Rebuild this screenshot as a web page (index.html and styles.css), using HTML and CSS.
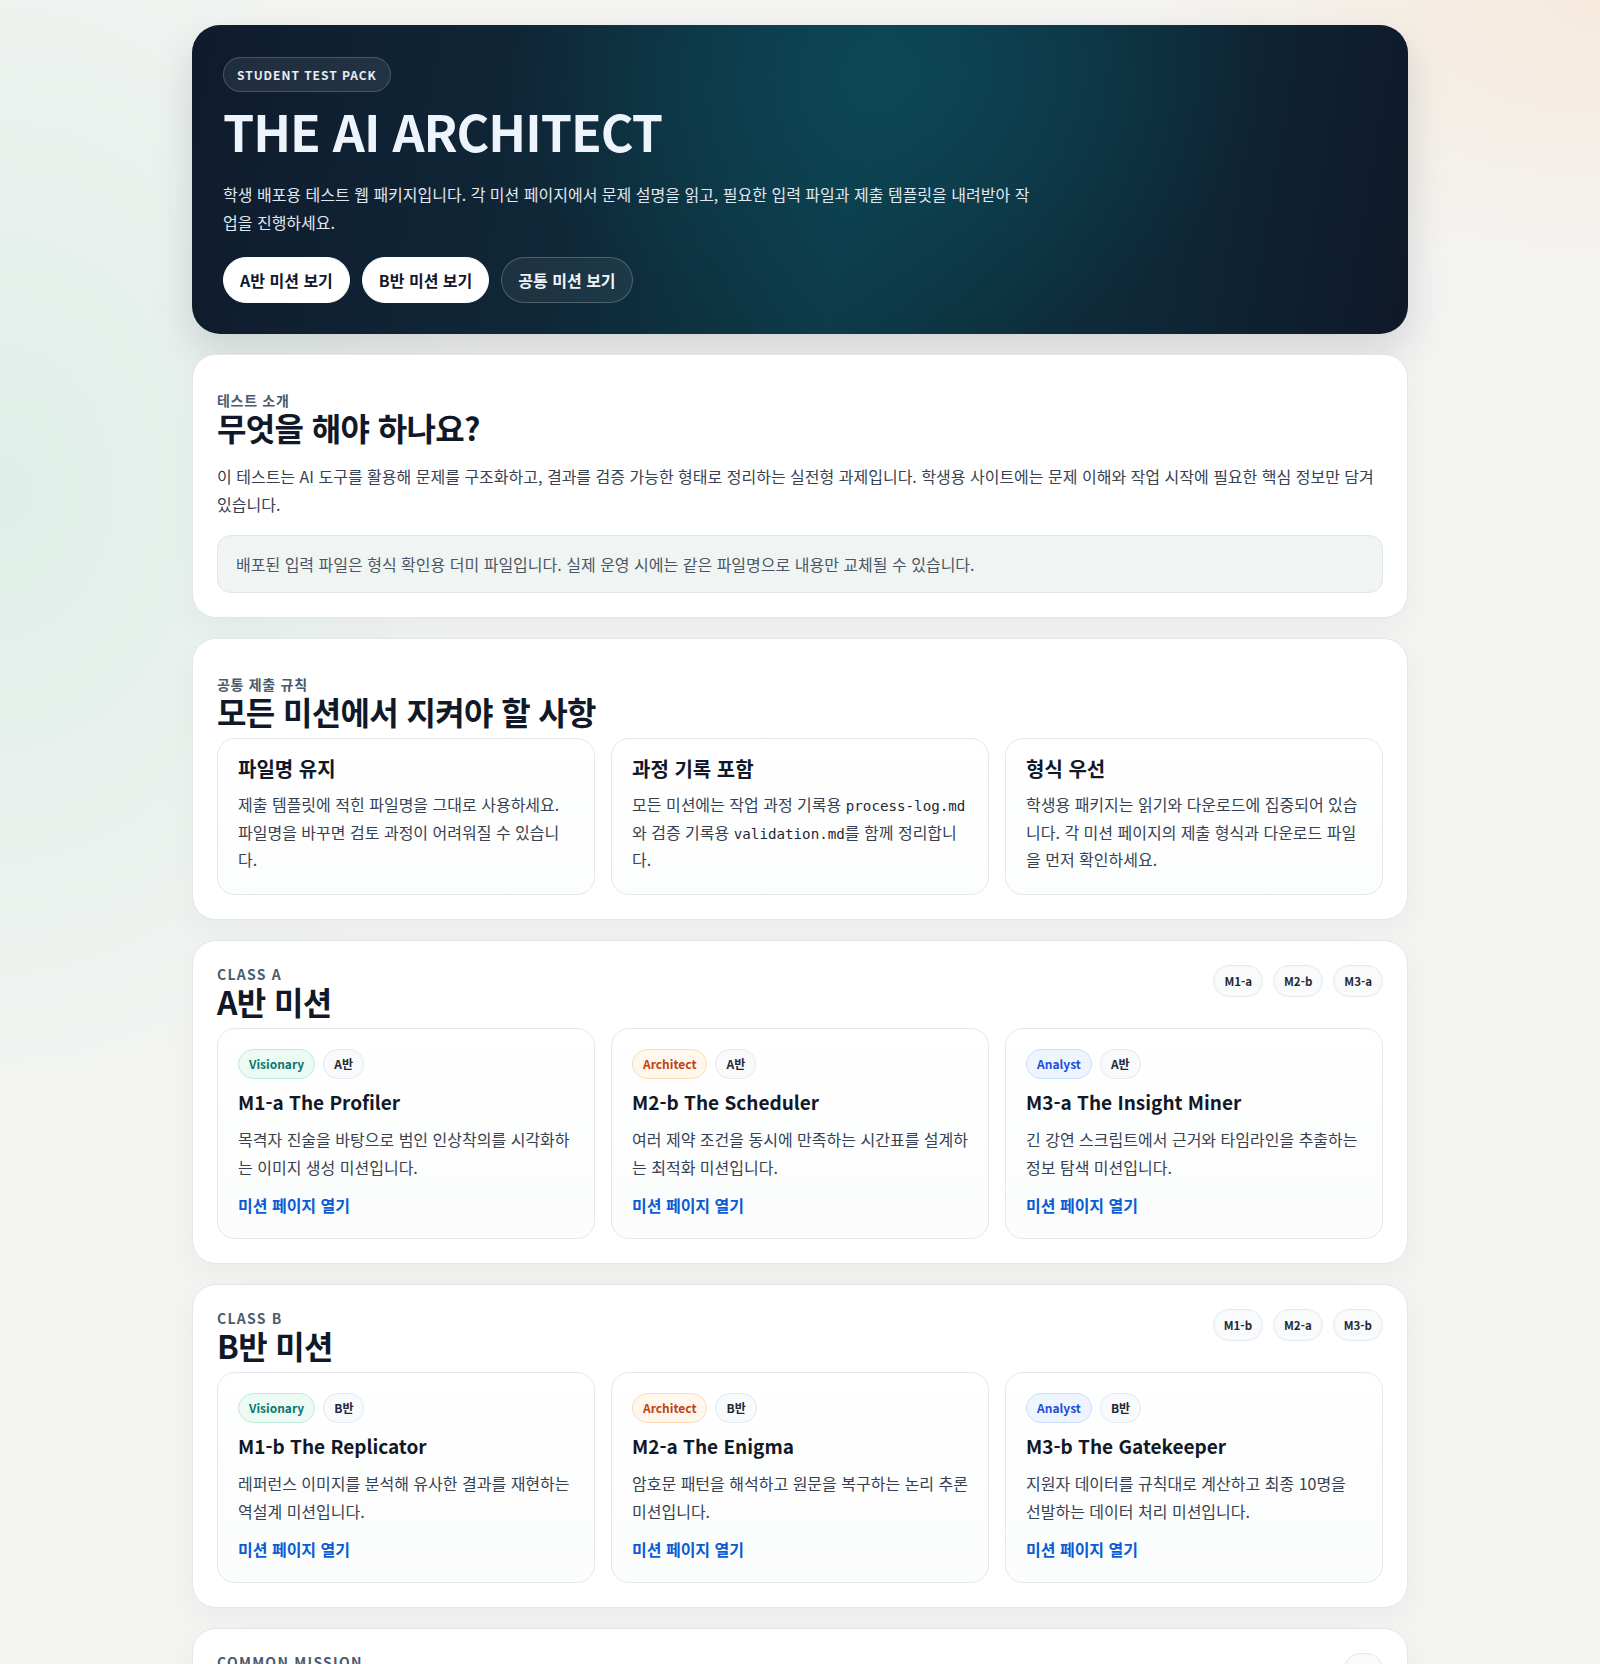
FILE: index.html
```html
<!DOCTYPE html>
<html lang="ko">
<head>
<meta charset="utf-8">
<title>THE AI ARCHITECT — Student Test Pack</title>
<link rel="stylesheet" href="styles.css">
</head>
<body>
<main class="page">
  <header class="hero">
    <span class="hero-badge">STUDENT TEST PACK</span>
    <h1 class="hero-title">THE AI ARCHITECT</h1>
    <p class="hero-text">학생 배포용 테스트 웹 패키지입니다. 각 미션 페이지에서 문제 설명을 읽고, 필요한 입력 파일과 제출 템플릿을 내려받아 작업을 진행하세요.</p>
    <div class="hero-actions">
      <a class="btn btn-light" href="#class-a">A반 미션 보기</a>
      <a class="btn btn-light" href="#class-b">B반 미션 보기</a>
      <a class="btn btn-ghost" href="#common">공통 미션 보기</a>
    </div>
  </header>

  <section class="panel panel-top">
    <div class="panel-head">
      <span class="eyebrow">테스트 소개</span>
      <h2 class="panel-title">무엇을 해야 하나요?</h2>
    </div>
    <p class="intro-text">이 테스트는 AI 도구를 활용해 문제를 구조화하고, 결과를 검증 가능한 형태로 정리하는 실전형 과제입니다. 학생용 사이트에는 문제 이해와 작업 시작에 필요한 핵심 정보만 담겨 있습니다.</p>
    <div class="note">배포된 입력 파일은 형식 확인용 더미 파일입니다. 실제 운영 시에는 같은 파일명으로 내용만 교체될 수 있습니다.</div>
  </section>

  <section class="panel panel-top">
    <div class="panel-head">
      <span class="eyebrow">공통 제출 규칙</span>
      <h2 class="panel-title">모든 미션에서 지켜야 할 사항</h2>
    </div>
    <div class="grid">
      <article class="rule">
        <h3 class="rule-title">파일명 유지</h3>
        <p class="rule-text">제출 템플릿에 적힌 파일명을 그대로 사용하세요. 파일명을 바꾸면 검토 과정이 어려워질 수 있습니다.</p>
      </article>
      <article class="rule">
        <h3 class="rule-title">과정 기록 포함</h3>
        <p class="rule-text">모든 미션에는 작업 과정 기록용 <code>process-log.md</code>와 검증 기록용 <code>validation.md</code>를 함께 정리합니다.</p>
      </article>
      <article class="rule">
        <h3 class="rule-title">형식 우선</h3>
        <p class="rule-text">학생용 패키지는 읽기와 다운로드에 집중되어 있습니다. 각 미션 페이지의 제출 형식과 다운로드 파일을 먼저 확인하세요.</p>
      </article>
    </div>
  </section>

  <section class="panel" id="class-a">
    <div class="panel-row">
      <div class="panel-head">
        <span class="eyebrow eyebrow-latin">CLASS A</span>
        <h2 class="panel-title">A반 미션</h2>
      </div>
      <div class="chips">
        <span class="chip">M1-a</span>
        <span class="chip">M2-b</span>
        <span class="chip">M3-a</span>
      </div>
    </div>
    <div class="grid">
      <article class="mission">
        <div class="tags"><span class="tag tag-visionary">Visionary</span><span class="tag">A반</span></div>
        <h3 class="mission-title">M1-a The Profiler</h3>
        <p class="mission-text">목격자 진술을 바탕으로 범인 인상착의를 시각화하는 이미지 생성 미션입니다.</p>
        <a class="mission-link" href="#">미션 페이지 열기</a>
      </article>
      <article class="mission">
        <div class="tags"><span class="tag tag-architect">Architect</span><span class="tag">A반</span></div>
        <h3 class="mission-title">M2-b The Scheduler</h3>
        <p class="mission-text">여러 제약 조건을 동시에 만족하는 시간표를 설계하는 최적화 미션입니다.</p>
        <a class="mission-link" href="#">미션 페이지 열기</a>
      </article>
      <article class="mission">
        <div class="tags"><span class="tag tag-analyst">Analyst</span><span class="tag">A반</span></div>
        <h3 class="mission-title">M3-a The Insight Miner</h3>
        <p class="mission-text">긴 강연 스크립트에서 근거와 타임라인을 추출하는 정보 탐색 미션입니다.</p>
        <a class="mission-link" href="#">미션 페이지 열기</a>
      </article>
    </div>
  </section>

  <section class="panel" id="class-b">
    <div class="panel-row">
      <div class="panel-head">
        <span class="eyebrow eyebrow-latin">CLASS B</span>
        <h2 class="panel-title">B반 미션</h2>
      </div>
      <div class="chips">
        <span class="chip">M1-b</span>
        <span class="chip">M2-a</span>
        <span class="chip">M3-b</span>
      </div>
    </div>
    <div class="grid">
      <article class="mission">
        <div class="tags"><span class="tag tag-visionary">Visionary</span><span class="tag">B반</span></div>
        <h3 class="mission-title">M1-b The Replicator</h3>
        <p class="mission-text">레퍼런스 이미지를 분석해 유사한 결과를 재현하는 역설계 미션입니다.</p>
        <a class="mission-link" href="#">미션 페이지 열기</a>
      </article>
      <article class="mission">
        <div class="tags"><span class="tag tag-architect">Architect</span><span class="tag">B반</span></div>
        <h3 class="mission-title">M2-a The Enigma</h3>
        <p class="mission-text">암호문 패턴을 해석하고 원문을 복구하는 논리 추론 미션입니다.</p>
        <a class="mission-link" href="#">미션 페이지 열기</a>
      </article>
      <article class="mission">
        <div class="tags"><span class="tag tag-analyst">Analyst</span><span class="tag">B반</span></div>
        <h3 class="mission-title">M3-b The Gatekeeper</h3>
        <p class="mission-text">지원자 데이터를 규칙대로 계산하고 최종 10명을 선발하는 데이터 처리 미션입니다.</p>
        <a class="mission-link" href="#">미션 페이지 열기</a>
      </article>
    </div>
  </section>

  <section class="panel" id="common">
    <div class="panel-row">
      <div class="panel-head">
        <span class="eyebrow eyebrow-latin">COMMON MISSION</span>
        <h2 class="panel-title">공통 미션</h2>
      </div>
      <div class="chips">
        <span class="chip">M4</span>
      </div>
    </div>
    <div class="grid">
      <article class="mission">
        <div class="tags"><span class="tag">공통</span></div>
        <h3 class="mission-title">M4 Common Mission</h3>
        <p class="mission-text">모든 학생이 함께 수행하는 공통 미션입니다.</p>
        <a class="mission-link" href="#">미션 페이지 열기</a>
      </article>
    </div>
  </section>
</main>
</body>
</html>
```

FILE: styles.css
```css
* {
  box-sizing: border-box;
}

html,
body {
  margin: 0;
  padding: 0;
}

body {
  font-family: "Noto Sans CJK KR", "Noto Sans", sans-serif;
  color: #1f2937;
  font-size: 16px;
  background:
    radial-gradient(ellipse 700px 420px at 100% 0%, rgba(250, 226, 204, 0.55), rgba(250, 226, 204, 0) 70%),
    radial-gradient(ellipse 700px 900px at 0% 25%, rgba(214, 236, 228, 0.7), rgba(214, 236, 228, 0) 70%),
    #f3f4f2;
  min-height: 100vh;
}

.page {
  width: 1216px;
  margin: 0 auto;
  padding: 25px 0 40px;
  display: flex;
  flex-direction: column;
  gap: 20px;
}

/* HERO */
.hero {
  border-radius: 28px;
  padding: 32px 31px 31px;
  color: #f1f5f9;
  background:
    radial-gradient(ellipse 520px 400px at 57% 16%, rgba(12, 74, 90, 0.8), rgba(12, 74, 90, 0) 72%),
    linear-gradient(100deg, #0f1b2d 0%, #0f2838 32%, #0c3a47 54%, #0e2b3a 74%, #0f1829 100%);
  box-shadow: 0 18px 40px rgba(15, 23, 42, 0.14);
}

.hero-badge {
  display: inline-block;
  height: 35px;
  line-height: 33px;
  padding: 0 13px;
  border-radius: 999px;
  border: 1px solid rgba(255, 255, 255, 0.18);
  background: rgba(255, 255, 255, 0.08);
  font-size: 12px;
  font-weight: 700;
  letter-spacing: 0.08em;
  color: #e8eef5;
}

.hero-title {
  margin: 10px 0 0;
  font-size: 50px;
  line-height: 56px;
  font-weight: 700;
  letter-spacing: -0.02em;
  color: #eef4fb;
}

.hero-text {
  margin: 22px 0 0;
  max-width: 812px;
  line-height: 28px;
  color: #e2e8f0;
}

.hero-actions {
  display: flex;
  gap: 12px;
  margin-top: 21px;
}

.btn {
  display: inline-flex;
  align-items: center;
  height: 46px;
  padding: 0 16px;
  border-radius: 999px;
  font-size: 16px;
  font-weight: 700;
  text-decoration: none;
}

.btn-light {
  background: #ffffff;
  color: #0f172a;
  border: 1px solid #ffffff;
}

.btn-ghost {
  background: rgba(255, 255, 255, 0.06);
  color: #f1f5f9;
  border: 1px solid rgba(255, 255, 255, 0.22);
}

/* PANELS */
.panel {
  background: #ffffff;
  border: 1px solid #e3e7e6;
  border-radius: 24px;
  padding: 24px;
  box-shadow: 0 10px 30px rgba(15, 23, 42, 0.035);
}

.panel-top {
  padding-top: 36px;
}

.panel-row {
  display: flex;
  justify-content: space-between;
  align-items: flex-start;
}

.panel-head {
  display: flex;
  flex-direction: column;
}

.eyebrow {
  font-size: 14px;
  line-height: 18px;
  font-weight: 700;
  letter-spacing: 0.05em;
  color: #4b5b6b;
}

.eyebrow-latin {
  letter-spacing: 0.09em;
}

.panel-title {
  margin: 0;
  font-size: 32px;
  line-height: 36px;
  font-weight: 700;
  letter-spacing: -0.02em;
  color: #111827;
}

.intro-text {
  margin: 18px 0 0;
  line-height: 27.6px;
  color: #374151;
}

.note {
  margin-top: 17px;
  padding: 16px 18px;
  border-radius: 14px;
  background: #f0f5f3;
  border: 1px solid #dfe8e4;
  line-height: 24px;
  color: #4b5563;
}

.chips {
  display: flex;
  gap: 10px;
}

.chip {
  height: 32px;
  line-height: 30px;
  padding: 0 10px;
  border-radius: 999px;
  border: 1px solid #e2e8f0;
  background: #f8fafc;
  font-size: 11.5px;
  font-weight: 700;
  color: #1f2937;
}

.grid {
  display: grid;
  grid-template-columns: repeat(3, 1fr);
  gap: 16px;
  margin-top: 9px;
}

/* RULE CARDS */
.rule {
  border: 1px solid #e5e7eb;
  border-radius: 18px;
  padding: 17px 18.5px 20px 20px;
  background: linear-gradient(180deg, #ffffff 0%, #fcfdfd 100%);
}

.rule-title {
  margin: 0;
  font-size: 20px;
  line-height: 26px;
  font-weight: 700;
  color: #111827;
}

.rule-text {
  margin: 9px 0 0;
  line-height: 27.6px;
  color: #374151;
}

code {
  font-family: "DejaVu Sans Mono", "Liberation Mono", monospace;
  font-size: 14.2px;
  line-height: 1;
  color: #1f2937;
}

/* MISSION CARDS */
.mission {
  display: flex;
  flex-direction: column;
  align-items: flex-start;
  border: 1px solid #e5e7eb;
  border-radius: 18px;
  padding: 20px 18.5px 21px 20px;
  background: linear-gradient(180deg, #ffffff 0%, #fbfcfc 100%);
}

.tags {
  display: flex;
  gap: 8px;
}

.tag {
  height: 30px;
  line-height: 28px;
  padding: 0 10px;
  border-radius: 999px;
  border: 1px solid #e2e8f0;
  background: #f8fafc;
  font-size: 12px;
  font-weight: 700;
  color: #1f2937;
}

.tag-visionary {
  background: #ecfaf4;
  border-color: #bfeadb;
  color: #0f766e;
}

.tag-architect {
  background: #fff6ec;
  border-color: #fcdcb8;
  color: #c2410c;
}

.tag-analyst {
  background: #eef5ff;
  border-color: #c8dcfb;
  color: #1d4ed8;
}

.mission-title {
  margin: 10px 0 0;
  font-size: 19px;
  line-height: 26px;
  font-weight: 700;
  color: #111827;
}

.mission-text {
  margin: 11px 0 0;
  line-height: 27.6px;
  color: #374151;
}

.mission-link {
  margin-top: 12px;
  line-height: 24px;
  font-weight: 700;
  color: #0b5bd3;
  text-decoration: none;
}
```
